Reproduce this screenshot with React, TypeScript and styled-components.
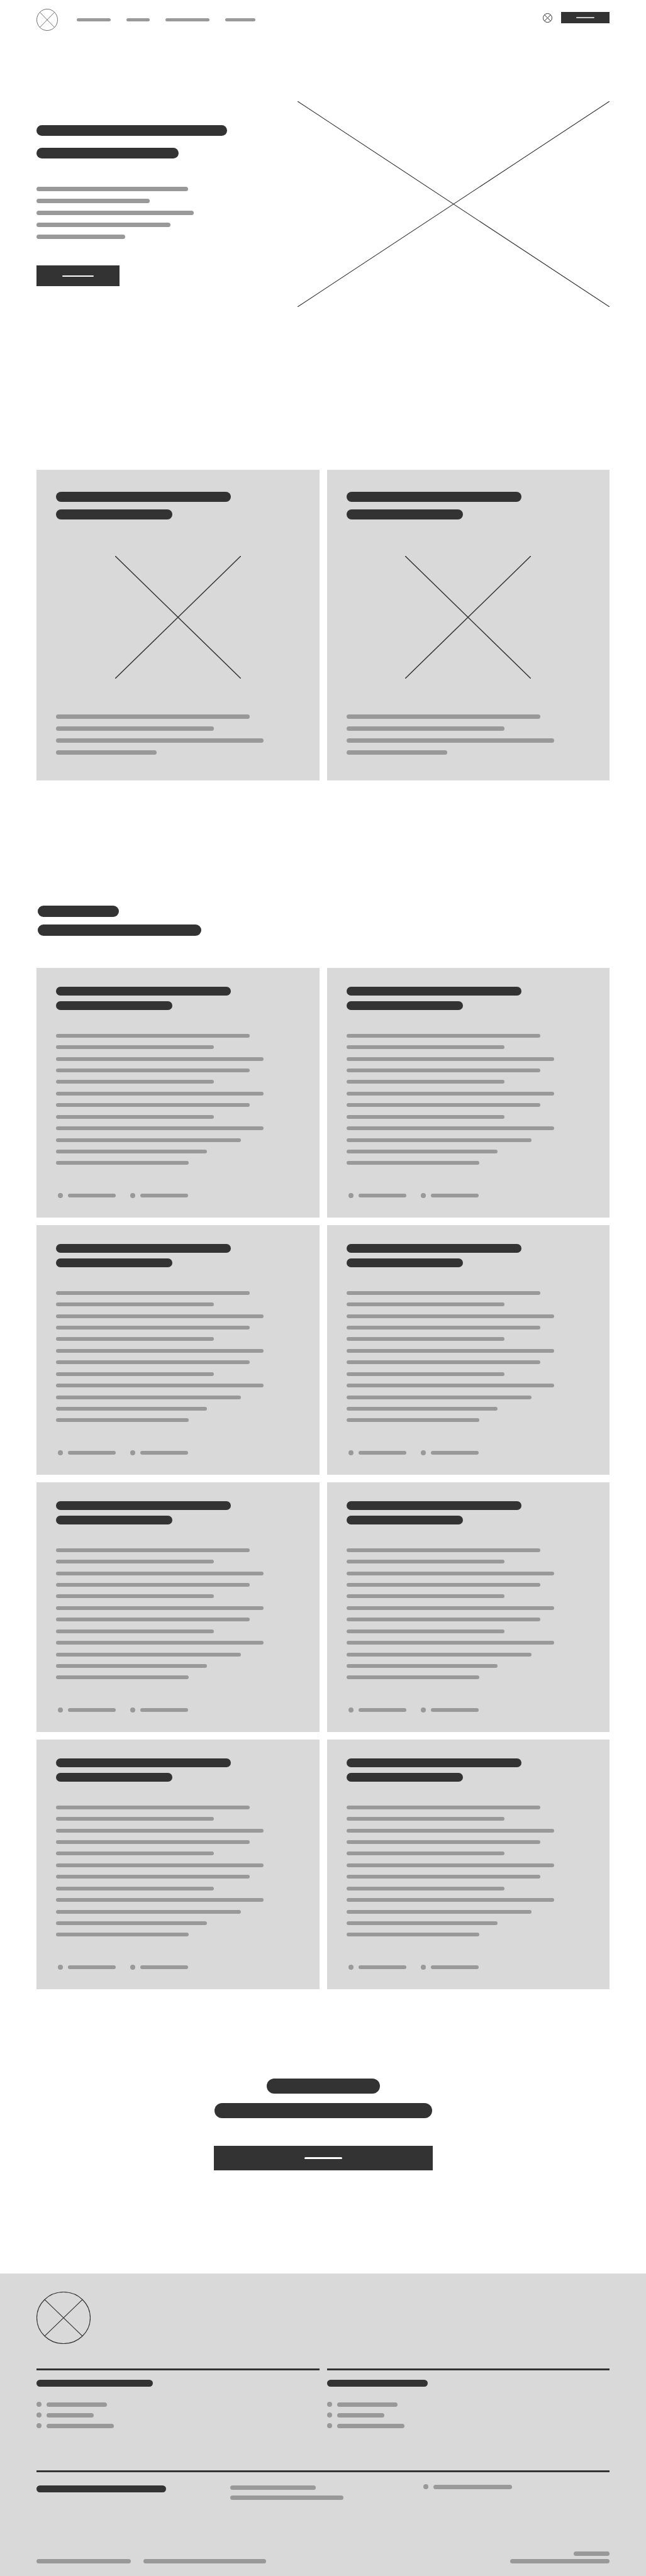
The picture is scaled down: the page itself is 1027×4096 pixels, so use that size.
import React from "react";
import styled, { createGlobalStyle } from "styled-components";

const ink = "#333333";
const grey = "#999999";
const panel = "#d9d9d9";

const GlobalStyle = createGlobalStyle`
  *, *::before, *::after { box-sizing: border-box; }
  body { margin: 0; background: #ffffff; font-family: "Liberation Sans", Arial, sans-serif; }
  h1, h2, h3, p, ul { margin: 0; padding: 0; }
  ul { list-style: none; }
  svg { display: block; }
`;

/* Placeholder strokes of text */
const Bar = styled.span<{ $w: number; $h: number; $tone?: string }>`
  display: block;
  width: ${(p) => p.$w}px;
  max-width: 100%;
  height: ${(p) => p.$h}px;
  border-radius: 12px;
  background: ${(p) => p.$tone ?? grey};
`;

const Stack = styled.div<{ $gap: number }>`
  display: flex;
  flex-direction: column;
  gap: ${(p) => p.$gap}px;
`;

const Dot = styled.span`
  flex: none;
  width: 8px;
  height: 8px;
  border-radius: 50%;
  background: ${grey};
`;

const Page = styled.div`
  width: 100%;
`;

const Header = styled.header`
  display: flex;
  justify-content: space-between;
  align-items: flex-start;
  padding: 14px 58px 0;
`;

const Brand = styled.div`
  display: flex;
  align-items: center;
  gap: 30px;
`;

const Nav = styled.nav`
  display: flex;
  gap: 25px;
`;

const Account = styled.div`
  display: flex;
  align-items: center;
  gap: 14px;
  padding-top: 5px;
`;

const Button = styled.button<{ $w: number; $h: number }>`
  display: flex;
  align-items: center;
  justify-content: center;
  width: ${(p) => p.$w}px;
  height: ${(p) => p.$h}px;
  padding: 0;
  border: 0;
  background: ${ink};
  cursor: pointer;
`;

const Hero = styled.section`
  display: grid;
  grid-template-columns: 415fr 496fr;
  margin-top: 112px;
  padding: 0 58px;
`;

const HeroCopy = styled.div`
  padding-top: 38px;
`;

const HeroText = styled.div`
  padding: 45px 0 42px;
`;

const HeroArt = styled.svg`
  width: 100%;
  height: auto;
  aspect-ratio: 496 / 327;
`;

const CardGrid = styled.div`
  display: grid;
  grid-template-columns: 1fr 1fr;
  gap: 12px;
`;

const Features = styled.section`
  margin-top: 259px;
  padding: 0 58px;
`;

const FeatureCard = styled.article`
  padding: 35px 31px 41px;
  background: ${panel};
`;

const FeatureArt = styled.svg`
  width: 200px;
  height: 195px;
  margin: 58px auto 57px;
`;

const Reviews = styled.section`
  margin-top: 199px;
  padding: 0 58px;
`;

const ReviewsHeading = styled.div`
  padding: 0 2px 51px;
`;

const ReviewCard = styled.article`
  padding: 30px 31px 31px;
  background: ${panel};
`;

const ReviewText = styled.div`
  display: flex;
  flex-direction: column;
  gap: 13px;
  padding: 38px 0 45px;
`;

const Meta = styled.div`
  display: flex;
  gap: 23px;
  padding-left: 3px;
`;

const DotRow = styled.div`
  display: flex;
  align-items: center;
  gap: 8px;
`;

const Cta = styled.section`
  display: flex;
  flex-direction: column;
  align-items: center;
  gap: 44px;
  margin: 142px 0 164px;
`;

const CtaHeading = styled.div`
  display: flex;
  flex-direction: column;
  align-items: center;
  gap: 15px;
`;

const Footer = styled.footer`
  padding: 29px 58px 20px;
  background: ${panel};
`;

const FooterColumns = styled.div`
  display: grid;
  grid-template-columns: 1fr 1fr;
  gap: 12px;
  margin: 39px 0 67px;
`;

const FooterColumn = styled.section`
  padding-top: 15px;
  border-top: 3px solid ${ink};
`;

const LinkList = styled.ul`
  display: flex;
  flex-direction: column;
  gap: 9px;
  padding-top: 24px;
`;

const FooterContact = styled.div`
  display: grid;
  grid-template-columns: repeat(3, 1fr);
  align-items: start;
  gap: 12px;
  padding-top: 19px;
  border-top: 3px solid ${ink};
`;

const ContactBlock = styled.div`
  padding-top: 2px;
`;

const Legal = styled.div`
  display: flex;
  justify-content: space-between;
  align-items: flex-end;
  padding-top: 82px;
`;

const LegalLinks = styled.div`
  display: flex;
  gap: 20px;
`;

const Credits = styled.div`
  display: flex;
  flex-direction: column;
  align-items: flex-end;
  gap: 5px;
`;

function CrossedCircle({ w, h, stroke }: { w: number; h: number; stroke: number }) {
  const rx = (w - 1) / 2;
  const ry = (h - 1) / 2;
  const dx = rx * 0.703;
  const dy = ry * 0.703;
  const cx = w / 2;
  const cy = h / 2;
  return (
    <svg width={w} height={h} viewBox={`0 0 ${w} ${h}`} fill="none" stroke={ink} strokeWidth={stroke} aria-hidden="true">
      <ellipse cx={cx} cy={cy} rx={rx} ry={ry} />
      <path d={`M${cx - dx} ${cy - dy}L${cx + dx} ${cy + dy}M${cx + dx} ${cy - dy}L${cx - dx} ${cy + dy}`} />
    </svg>
  );
}

function Feature() {
  return (
    <FeatureCard>
      <Stack as="h2" $gap={12}>
        <Bar $w={278} $h={16} $tone={ink} />
        <Bar $w={185} $h={16} $tone={ink} />
      </Stack>
      <FeatureArt viewBox="0 0 200 195" stroke={ink} strokeWidth="1.5" aria-hidden="true">
        <path d="M0 0L200 195M200 0L0 195" />
      </FeatureArt>
      <Stack $gap={12}>
        {[308, 251, 330, 160].map((w) => (
          <Bar key={w} $w={w} $h={7} />
        ))}
      </Stack>
    </FeatureCard>
  );
}

const paragraphs = [
  [308, 251],
  [330, 308, 251],
  [330, 308],
  [251, 330],
  [294, 240, 211],
];

function Review() {
  return (
    <ReviewCard>
      <Stack as="h3" $gap={9}>
        <Bar $w={278} $h={14} $tone={ink} />
        <Bar $w={185} $h={14} $tone={ink} />
      </Stack>
      <ReviewText>
        {paragraphs.map((lines, i) => (
          <Stack key={i} $gap={12}>
            {lines.map((w) => (
              <Bar key={w} $w={w} $h={6} />
            ))}
          </Stack>
        ))}
      </ReviewText>
      <Meta>
        {[0, 1].map((i) => (
          <DotRow key={i}>
            <Dot />
            <Bar $w={76} $h={6} />
          </DotRow>
        ))}
      </Meta>
    </ReviewCard>
  );
}

function LinkColumn({ title }: { title: number }) {
  return (
    <FooterColumn>
      <Bar $w={title} $h={11} $tone={ink} />
      <LinkList>
        {[96, 75, 107].map((w) => (
          <li key={w}>
            <DotRow as="a" href="#" aria-label="Footer link">
              <Dot />
              <Bar $w={w} $h={7} />
            </DotRow>
          </li>
        ))}
      </LinkList>
    </FooterColumn>
  );
}

export default function App() {
  return (
    <Page>
      <GlobalStyle />
      <Header>
        <Brand>
          <CrossedCircle w={34} h={35} stroke={0.7} />
          <Nav>
            {[54, 37, 70, 48].map((w) => (
              <a key={w} href="#" aria-label="Menu item">
                <Bar $w={w} $h={5} />
              </a>
            ))}
          </Nav>
        </Brand>
        <Account>
          <CrossedCircle w={15} h={15} stroke={1} />
          <Button $w={77} $h={18} aria-label="Sign up">
            <Bar $w={29} $h={2} $tone="#cfcfcf" />
          </Button>
        </Account>
      </Header>

      <main>
        <Hero>
          <HeroCopy>
            <Stack as="h1" $gap={19}>
              <Bar $w={303} $h={17} $tone={ink} />
              <Bar $w={226} $h={17} $tone={ink} />
            </Stack>
            <HeroText>
              <Stack $gap={12}>
                {[241, 180, 250, 213, 141].map((w) => (
                  <Bar key={w} $w={w} $h={7} />
                ))}
              </Stack>
            </HeroText>
            <Button $w={132} $h={33} aria-label="Get started">
              <Bar $w={50} $h={2} $tone="#ffffff" />
            </Button>
          </HeroCopy>
          <HeroArt viewBox="0 0 496 327" stroke={ink} strokeWidth="1.1" aria-hidden="true">
            <path d="M0 0L496 327M496 0L0 327" />
          </HeroArt>
        </Hero>

        <Features>
          <CardGrid>
            <Feature />
            <Feature />
          </CardGrid>
        </Features>

        <Reviews>
          <ReviewsHeading>
            <Stack as="h2" $gap={12}>
              <Bar $w={129} $h={18} $tone={ink} />
              <Bar $w={260} $h={18} $tone={ink} />
            </Stack>
          </ReviewsHeading>
          <CardGrid>
            {Array.from({ length: 8 }, (_, i) => (
              <Review key={i} />
            ))}
          </CardGrid>
        </Reviews>

        <Cta>
          <CtaHeading as="h2">
            <Bar $w={180} $h={24} $tone={ink} />
            <Bar $w={346} $h={24} $tone={ink} />
          </CtaHeading>
          <Button $w={348} $h={39} aria-label="Contact us">
            <Bar $w={60} $h={3} $tone="#ffffff" />
          </Button>
        </Cta>
      </main>

      <Footer>
        <CrossedCircle w={86} h={83} stroke={1.2} />
        <FooterColumns>
          <LinkColumn title={185} />
          <LinkColumn title={160} />
        </FooterColumns>
        <FooterContact>
          <ContactBlock>
            <Bar $w={206} $h={11} $tone={ink} />
          </ContactBlock>
          <ContactBlock>
            <Stack $gap={9}>
              <Bar $w={136} $h={7} />
              <Bar $w={180} $h={7} />
            </Stack>
          </ContactBlock>
          <DotRow as="a" href="#" aria-label="Contact link">
            <Dot />
            <Bar $w={125} $h={7} />
          </DotRow>
        </FooterContact>
        <Legal>
          <LegalLinks>
            <Bar $w={150} $h={7} />
            <Bar $w={195} $h={7} />
          </LegalLinks>
          <Credits>
            <Bar $w={57} $h={7} />
            <Bar $w={158} $h={7} />
          </Credits>
        </Legal>
      </Footer>
    </Page>
  );
}
